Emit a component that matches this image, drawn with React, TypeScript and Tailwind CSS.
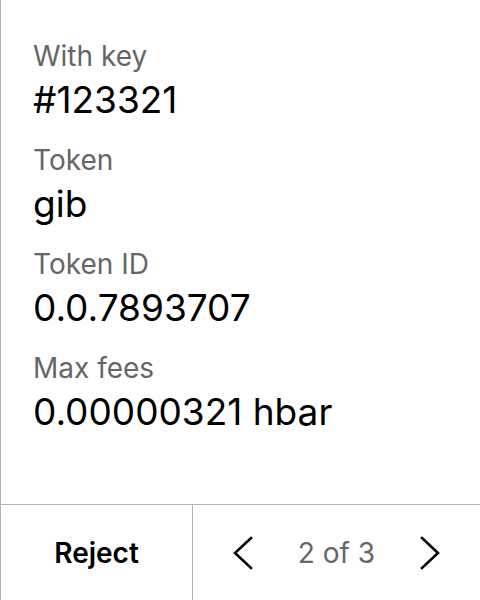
import React from "react";

const rows = [
  { label: "With key", value: "#123321" },
  { label: "Token", value: "gib" },
  { label: "Token ID", value: "0.0.7893707" },
  { label: "Max fees", value: "0.00000321 hbar" },
];

function Chevron({ dir }: { dir: "left" | "right" }) {
  return (
    <svg width="20" height="34" viewBox="0 0 20 34" fill="none">
      <polyline
        points={dir === "left" ? "18,2 2,17 18,32" : "2,2 18,17 2,32"}
        stroke="#000"
        strokeWidth="2.6"
        strokeLinecap="square"
        strokeLinejoin="miter"
      />
    </svg>
  );
}

export default function App() {
  return (
    <div
      className="w-[480px] h-[600px] bg-white border-l border-[#b3b3b3] flex flex-col"
      style={{ fontFamily: "Inter, 'Liberation Sans', sans-serif" }}
    >
      <div className="flex-1 flex flex-col gap-6 pt-10 pl-8">
        {rows.map((r) => (
          <div key={r.label} className="flex flex-col gap-2">
            <div className="text-[28px] leading-[32px] text-[#666666]">{r.label}</div>
            <div className="text-[37px] leading-[40px] text-black">{r.value}</div>
          </div>
        ))}
      </div>
      <div className="h-[96px] border-t border-[#b3b3b3] flex">
        <div className="w-[192px] border-r border-[#b3b3b3] flex items-center justify-center">
          <span className="text-[28px] font-semibold text-black">Reject</span>
        </div>
        <div className="flex-1 flex items-center justify-between px-[40px]">
          <Chevron dir="left" />
          <span className="text-[28px] text-[#666666]">2 of 3</span>
          <Chevron dir="right" />
        </div>
      </div>
    </div>
  );
}
